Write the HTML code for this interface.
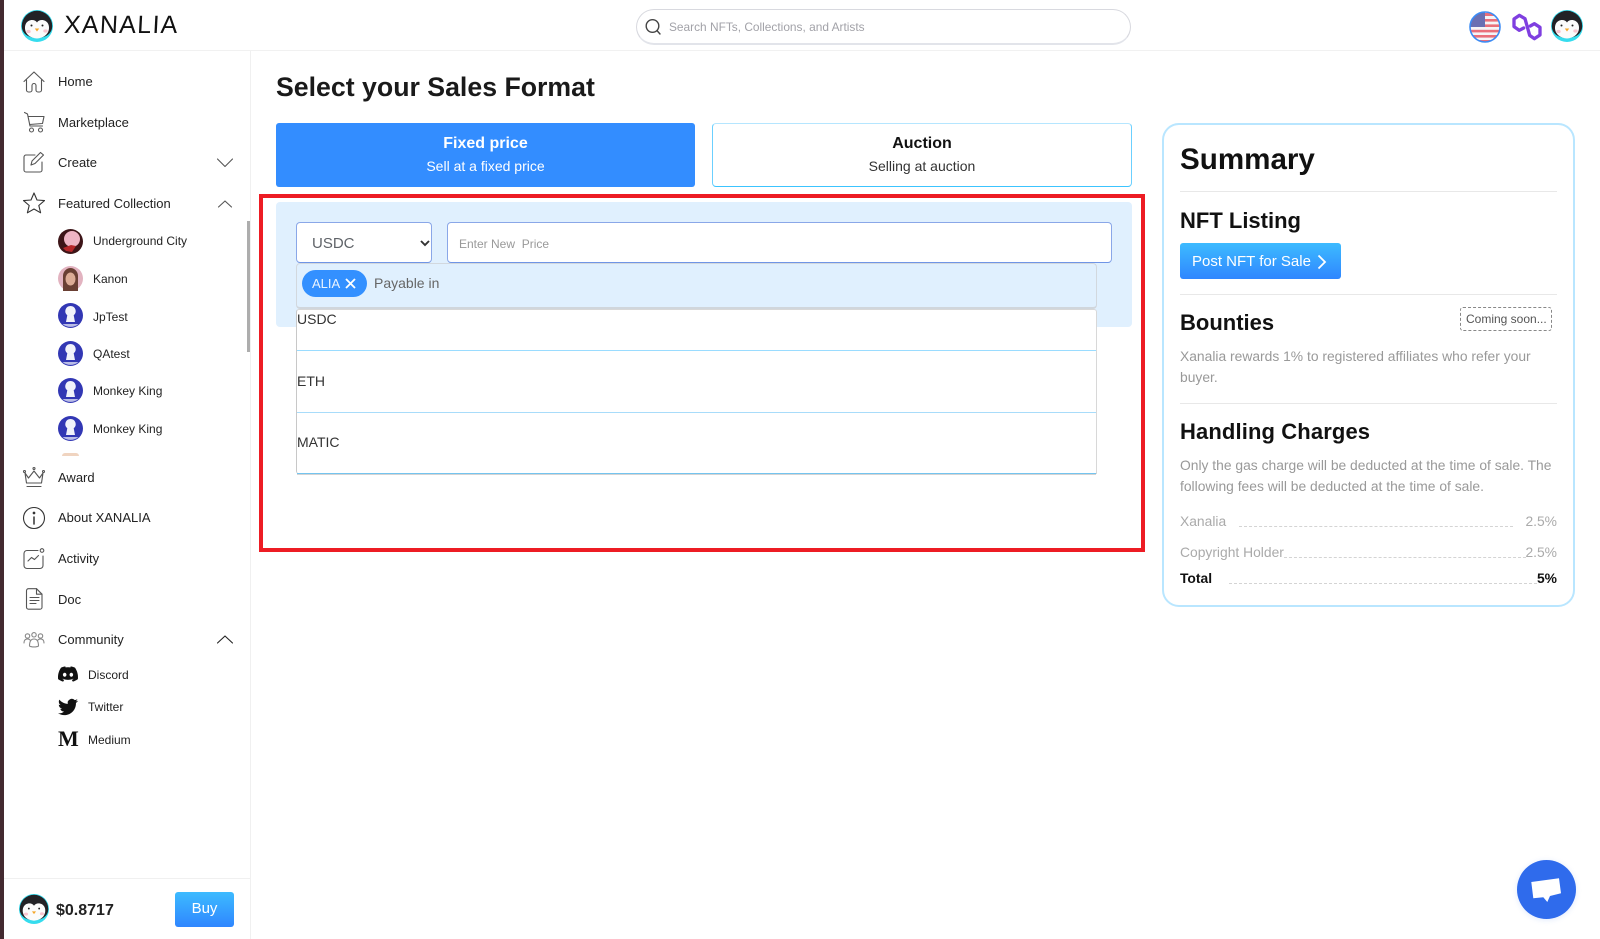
<!DOCTYPE html>
<html lang="en">
<head>
<meta charset="utf-8">
<title>Xanalia - Select your Sales Format</title>
<style>
html,body{margin:0;padding:0;width:1600px;height:939px;overflow:hidden;background:#fff;font-family:"Liberation Sans",sans-serif;color:#222}
.a{position:absolute}
.t{position:absolute;white-space:pre;line-height:20px}
.m{font-size:13px;left:58px;color:#222}
.s{font-size:12px;left:93px;color:#222}
.c{font-size:12px;left:88px;color:#222}
svg{position:absolute;overflow:visible}
.ic{fill:none;stroke:#555;stroke-width:1.1;stroke-linecap:round;stroke-linejoin:round}
.h{font-size:22px;font-weight:bold;left:1180px;color:#111;line-height:26px}
.g{font-size:13.85px;color:#999;left:1180px}
.hr{position:absolute;left:1180px;width:377px;height:1px;background:#e8e8e8}
.dot{position:absolute;height:0;border-top:1px dashed #d4d4d4}
.row{position:absolute;left:297px;font-size:14px;color:#333;line-height:20px}
</style>
</head>
<body>
<svg width="0" height="0" style="position:absolute">
<defs>
<symbol id="peng" viewBox="0 0 32 32">
<circle cx="16" cy="16" r="16" fill="#35dcee"/>
<path d="M.8 16A15.200 15.200 0 0 1 31.200 16C31.200 22 27 27.500 16 28C5 27.500 .8 22 .8 16Z" fill="#222226"/>
<path d="M16 12.500C18 9 24.500 9 27 13.500C29.500 18 28 27.500 16 28.500C4 27.500 2.500 18 5 13.500C7.500 9 14 9 16 12.500Z" fill="#fbfbfb"/>
<circle cx="10.500" cy="15.500" r="1" fill="#222"/><circle cx="21.500" cy="15.500" r="1" fill="#222"/>
<path d="M13.800 18.500H18.200L16 21.500Z" fill="#f4a72a"/>
<ellipse cx="7.500" cy="21.500" rx="2.200" ry="1.600" fill="#f9c3cf"/><ellipse cx="24.500" cy="21" rx="2.200" ry="1.600" fill="#f9c3cf"/>
</symbol>
<symbol id="blue" viewBox="0 0 25 25">
<circle cx="12.500" cy="12.500" r="12.500" fill="#3237b4"/>
<path d="M12.500 3a5.200 5.200 0 0 1 3.200 9.300L17 19H8l1.300-6.700A5.200 5.200 0 0 1 12.500 3Z" fill="#f1f2fa"/>
<path d="M4.500 21h16a12.500 12.500 0 0 1-16 0Z" fill="#b9bce6"/>
</symbol>
</defs>
</svg>

<!-- left edge strip -->
<div class="a" style="left:0;top:0;width:4px;height:939px;background:#432a30"></div>

<!-- header -->
<div class="a" style="left:4px;top:50px;width:1596px;height:1px;background:#f1f1f1"></div>
<svg style="left:21px;top:10px" width="32" height="32"><use href="#peng" width="32" height="32"/></svg>
<div class="t" style="left:64px;top:10px;font-size:25px;line-height:30px;letter-spacing:1.300px;color:#111;transform:skewX(-3deg);transform-origin:left">XANALIA</div>

<div class="a" style="left:636px;top:9px;width:493px;height:33px;border:1px solid #d8d9df;border-bottom:2px solid #e2e4ea;border-radius:18px;background:#fff"></div>
<svg style="left:645px;top:18px" width="18" height="18" class="ic"><circle cx="7.500" cy="8" r="6.300" stroke="#444" stroke-width="1.400"/><path d="M12 12.600L15 16" stroke="#444" stroke-width="1.400"/></svg>
<div class="t" style="left:669px;top:17px;font-size:11.900px;color:#a2a2a8">Search NFTs, Collections, and Artists</div>

<!-- flag -->
<svg style="left:1469px;top:11px" width="32" height="32" viewBox="0 0 32 32">
<clipPath id="fc"><circle cx="16" cy="16" r="15"/></clipPath>
<g clip-path="url(#fc)"><rect width="32" height="32" fill="#f6f4f6"/>
<g fill="#ea6f7a"><rect y="2" width="32" height="3"/><rect y="8" width="32" height="2.600"/><rect y="13.400" width="32" height="2.600"/><rect y="18.800" width="32" height="2.600"/><rect y="24" width="32" height="2.600"/><rect y="29" width="32" height="3"/></g>
<rect width="16" height="16" fill="#6a6fb2"/></g>
<circle cx="16" cy="16" r="15" fill="none" stroke="#3b8cf5" stroke-width="1.600"/>
</svg>
<!-- polygon icon -->
<svg style="left:1505px;top:8px" width="45" height="36" viewBox="0 0 135 108" fill="none" stroke="#7f3fe0" stroke-width="10" stroke-linejoin="round" stroke-linecap="round">
<path d="M56 60L43 67 27 56V33L43 22 60 32 74 82 88 92 105 81V58L88 47 76 54"/>
</svg>
<svg style="left:1551px;top:10px" width="32" height="32"><use href="#peng" width="32" height="32"/></svg>

<!-- sidebar -->
<div class="a" style="left:250px;top:51px;width:1px;height:888px;background:#f0f0f0"></div>
<div class="a" style="left:247px;top:221px;width:3px;height:131px;background:#adadad"></div>

<!-- home -->
<svg style="left:23px;top:71px" width="22" height="22" viewBox="0 0 22 22" class="ic"><path d="M1 10.500L11 1l10 9.500M3.500 9v10a2 2 0 0 0 2 2h1.500a2 2 0 0 0 2-2v-4.500a2 2 0 0 1 4 0V19a2 2 0 0 0 2 2h1.500a2 2 0 0 0 2-2V9"/></svg>
<div class="t m" style="top:72px">Home</div>
<!-- cart -->
<svg style="left:24px;top:112px" width="21" height="21" viewBox="0 0 21 21" class="ic"><path d="M0.500 0.500L3.500 2l2.500 12h12.500M4.200 4.500H20l-1.500 7-13 1"/><circle cx="7.500" cy="18" r="2"/><circle cx="16.500" cy="18" r="2"/></svg>
<div class="t m" style="top:113px">Marketplace</div>
<!-- create -->
<svg style="left:23px;top:151px" width="22" height="22" viewBox="0 0 22 22" class="ic"><path d="M12 4H3a2 2 0 0 0-2 2v13a2 2 0 0 0 2 2h14a2 2 0 0 0 2-2v-8"/><path d="M8 14l1-4L17.500 1.500l3 2.500-8.500 8.500Z"/></svg>
<div class="t m" style="top:153px">Create</div>
<svg style="left:217px;top:158px" width="16" height="10" viewBox="0 0 16 10" class="ic"><path d="M0.500 1L8 8.500 15.500 1"/></svg>
<!-- star -->
<svg style="left:23px;top:192px" width="22" height="22" viewBox="0 0 22 22" class="ic"><path d="M11 1l3 7 7.500.6-5.700 4.900 1.800 7.300L11 17l-6.600 3.800 1.800-7.300L.5 8.600 8 8Z" stroke="#333"/></svg>
<div class="t m" style="top:194px">Featured Collection</div>
<svg style="left:218px;top:200px" width="14" height="8" viewBox="0 0 14 8" class="ic"><path d="M0.500 7L7 1l6.500 6"/></svg>

<svg style="left:58px;top:229px" width="25" height="25" viewBox="0 0 25 25"><circle cx="12.500" cy="12.500" r="12.500" fill="#3d1518"/><circle cx="14" cy="10" r="8" fill="#eeb4c4"/><path d="M5 19l8-3 5 1-4 6-6-1Z" fill="#b5272a"/></svg>
<div class="t s" style="top:231px">Underground City</div>
<svg style="left:58px;top:266px" width="25" height="25" viewBox="0 0 25 25"><circle cx="12.500" cy="12.500" r="12.500" fill="#e2b3c0"/><path d="M5 25V10a7.500 8 0 0 1 15 0v15Z" fill="#6a3f33"/><ellipse cx="12.500" cy="13" rx="5" ry="6.500" fill="#dcab95"/></svg>
<div class="t s" style="top:269px">Kanon</div>
<svg style="left:58px;top:303px" width="25" height="25"><use href="#blue" width="25" height="25"/></svg>
<div class="t s" style="top:307px">JpTest</div>
<svg style="left:58px;top:341px" width="25" height="25"><use href="#blue" width="25" height="25"/></svg>
<div class="t s" style="top:344px">QAtest</div>
<svg style="left:58px;top:378px" width="25" height="25"><use href="#blue" width="25" height="25"/></svg>
<div class="t s" style="top:381px">Monkey King</div>
<svg style="left:58px;top:416px" width="25" height="25"><use href="#blue" width="25" height="25"/></svg>
<div class="t s" style="top:419px">Monkey King</div>
<div class="a" style="left:62px;top:453px;width:17px;height:3px;background:#f0d4c0;border-radius:9px 9px 0 0"></div>

<!-- award -->
<svg style="left:23px;top:467px" width="22" height="21" viewBox="0 0 22 21" class="ic"><path d="M2 6l3.500 5L11 4l5.500 7L20 6l-1.500 10h-15Z"/><path d="M4 19.500h14"/><circle cx="1.500" cy="4.500" r="1"/><circle cx="11" cy="1.500" r="1"/><circle cx="20.500" cy="4.500" r="1"/></svg>
<div class="t m" style="top:468px">Award</div>
<!-- about -->
<svg style="left:22px;top:506px" width="24" height="24" viewBox="0 0 24 24" class="ic"><circle cx="12" cy="12" r="10.500" stroke="#333"/><path d="M12 11v7" stroke="#333" stroke-width="1.500"/><circle cx="12" cy="7" r=".8" fill="#333" stroke="#333"/></svg>
<div class="t m" style="top:508px">About XANALIA</div>
<!-- activity -->
<svg style="left:23px;top:548px" width="22" height="22" viewBox="0 0 22 22" class="ic"><path d="M15 2.500H4a3 3 0 0 0-3 3v12a3 3 0 0 0 3 3h13a3 3 0 0 0 3-3V8"/><circle cx="19" cy="2.500" r="1.800"/><path d="M5 13l3.500-3.500 3 2 4-4"/></svg>
<div class="t m" style="top:549px">Activity</div>
<!-- doc -->
<svg style="left:26px;top:588px" width="17" height="22" viewBox="0 0 17 22" class="ic"><path d="M2.500 .7h8l5.500 5.500v13a2 2 0 0 1-2 2H2.500a2 2 0 0 1-2-2V2.700a2 2 0 0 1 2-2Z"/><path d="M10.500 .7v5.500H16M4 9.500h9M4 12.500h9M4 15.500h6"/></svg>
<div class="t m" style="top:590px">Doc</div>
<!-- community -->
<svg style="left:23px;top:632px" width="22" height="16" viewBox="0 0 22 16" class="ic"><g stroke="#888"><circle cx="4.500" cy="4" r="2.200"/><circle cx="11" cy="2.800" r="2.200"/><circle cx="17.500" cy="4" r="2.200"/><path d="M1 11c0-3 1.500-4 3.500-4 1 0 2 .4 2.500 1M21 11c0-3-1.500-4-3.500-4-1 0-2 .4-2.500 1M6.500 14c0-5 2-7 4.500-7s4.500 2 4.500 7c-2 1.300-7 1.300-9 0Z"/></g></svg>
<div class="t m" style="top:630px">Community</div>
<svg style="left:217px;top:635px" width="16" height="9" viewBox="0 0 16 9" class="ic"><path d="M0.500 8L8 1l7.500 7" stroke="#222"/></svg>

<svg style="left:58px;top:664px" width="20" height="20" viewBox="0 0 24 24"><path fill="#111" d="M20.317 4.3698a19.7913 19.7913 0 00-4.8851-1.5152.0741.0741 0 00-.0785.0371c-.211.3753-.4447.8648-.6083 1.2495-1.8447-.2762-3.68-.2762-5.4868 0-.1636-.3933-.4058-.8742-.6177-1.2495a.077.077 0 00-.0785-.037 19.7363 19.7363 0 00-4.8852 1.515.0699.0699 0 00-.0321.0277C.5334 9.0458-.319 13.5799.0992 18.0578a.0824.0824 0 00.0312.0561c2.0528 1.5076 4.0413 2.4228 5.9929 3.0294a.0777.0777 0 00.0842-.0276c.4616-.6304.8731-1.2952 1.226-1.9942a.076.076 0 00-.0416-.1057c-.6528-.2476-1.2743-.5495-1.8722-.8923a.077.077 0 01-.0076-.1277c.1258-.0943.2517-.1923.3718-.2914a.0743.0743 0 01.0776-.0105c3.9278 1.7933 8.18 1.7933 12.0614 0a.0739.0739 0 01.0785.0095c.1202.099.246.1981.3728.2924a.077.077 0 01-.0066.1276 12.2986 12.2986 0 01-1.873.8914.0766.0766 0 00-.0407.1067c.3604.698.7719 1.3628 1.225 1.9932a.076.076 0 00.0842.0286c1.961-.6067 3.9495-1.5219 6.0023-3.0294a.077.077 0 00.0313-.0552c.5004-5.177-.8382-9.6739-3.5485-13.6604a.061.061 0 00-.0312-.0286zM8.02 15.3312c-1.1825 0-2.1569-1.0857-2.1569-2.419 0-1.3332.9555-2.4189 2.157-2.4189 1.2108 0 2.1757 1.0952 2.1568 2.419 0 1.3332-.9555 2.4189-2.1569 2.4189zm7.9748 0c-1.1825 0-2.1569-1.0857-2.1569-2.419 0-1.3332.9554-2.4189 2.1569-2.4189 1.2108 0 2.1757 1.0952 2.1568 2.419 0 1.3332-.946 2.4189-2.1568 2.4189Z"/></svg>
<div class="t c" style="top:665px">Discord</div>
<svg style="left:58px;top:697px" width="20" height="20" viewBox="0 0 24 24"><path fill="#111" d="M23.953 4.57a10 10 0 01-2.825.775 4.958 4.958 0 002.163-2.723c-.951.555-2.005.959-3.127 1.184a4.92 4.92 0 00-8.384 4.482C7.69 8.095 4.067 6.13 1.64 3.162a4.822 4.822 0 00-.666 2.475c0 1.71.87 3.213 2.188 4.096a4.904 4.904 0 01-2.228-.616v.06a4.923 4.923 0 003.946 4.827 4.996 4.996 0 01-2.212.085 4.936 4.936 0 004.604 3.417 9.867 9.867 0 01-6.102 2.105c-.39 0-.779-.023-1.17-.067a13.995 13.995 0 007.557 2.209c9.053 0 13.998-7.496 13.998-13.985 0-.21 0-.42-.015-.63A9.935 9.935 0 0024 4.59z"/></svg>
<div class="t c" style="top:697px">Twitter</div>
<div class="t" style="left:58px;top:727px;font-family:'Liberation Serif',serif;font-weight:bold;font-size:22px;line-height:24px;color:#111">M</div>
<div class="t c" style="top:730px">Medium</div>

<!-- sidebar footer -->
<div class="a" style="left:4px;top:878px;width:246px;height:1px;background:#f0f0f0"></div>
<svg style="left:19px;top:894px" width="30" height="30"><use href="#peng" width="30" height="30"/></svg>
<div class="t" style="left:56px;top:900.500px;font-size:16px;font-weight:bold;color:#222">$0.8717</div>
<div class="a" style="left:175px;top:892px;width:59px;height:35px;border-radius:3px;background:linear-gradient(#3dbbff,#2f86ff);color:#fff;font-size:15px;line-height:33px;text-align:center">Buy</div>

<!-- main -->
<div class="t" style="left:276px;top:70px;font-size:26.700px;font-weight:bold;line-height:34px;color:#1a1a1a">Select your Sales Format</div>

<div class="a" style="left:276px;top:123px;width:419px;height:64px;background:#338dff;border-radius:3px"></div>
<div class="t" style="left:276px;width:419px;top:133.500px;text-align:center;font-size:16px;font-weight:bold;color:#fff">Fixed price</div>
<div class="t" style="left:276px;width:419px;top:156px;text-align:center;font-size:14px;color:#fff">Sell at a fixed price</div>

<div class="a" style="left:712px;top:123px;width:418px;height:62px;border:1px solid #6bd0ff;border-top-color:#b5e6ff;border-bottom-color:#3cc4ff;border-radius:4px;background:#fff"></div>
<div class="t" style="left:712px;width:420px;top:133.500px;text-align:center;font-size:16px;font-weight:bold;color:#111">Auction</div>
<div class="t" style="left:712px;width:420px;top:156px;text-align:center;font-size:14px;color:#333">Selling at auction</div>

<!-- blue panel -->
<div class="a" style="left:276px;top:202px;width:856px;height:125px;background:#e0f0fe;border-radius:4px"></div>

<!-- select -->
<div class="a" style="left:296px;top:222px;width:134px;height:39px;border:1px solid #8aa7e8;border-bottom-color:#6f95e6;border-radius:4px;background:#fff"></div>
<div class="t" style="left:312px;top:234px;font-size:15px;color:#5f6368">USDC</div>
<svg style="left:419px;top:239px" width="12" height="8" viewBox="0 0 12 8"><path d="M2 2l4 4 4-4" fill="none" stroke="#333" stroke-width="1.900"/></svg>
<!-- input -->
<div class="a" style="left:447px;top:222px;width:663px;height:39px;border:1px solid #8aa7e8;border-bottom-color:#6f95e6;border-radius:4px;background:#fff"></div>
<div class="t" style="left:459px;top:234px;font-size:12px;color:#999">Enter New  Price</div>

<!-- payable -->
<div class="a" style="left:296px;top:263px;width:799px;height:43px;border:1px solid #d2d8de;border-bottom:2px solid #d0d6dc;border-radius:4px;background:#e0f0fe"></div>
<div class="a" style="left:302px;top:270px;width:65px;height:27px;border-radius:14px;background:#3390ff"></div>
<div class="t" style="left:312px;top:274px;font-size:13px;color:#eaf4ff">ALIA</div>
<svg style="left:345px;top:278px" width="11" height="11" viewBox="0 0 11 11"><path d="M1 1l9 9M10 1l-9 9" stroke="#fff" stroke-width="1.800" fill="none"/></svg>
<div class="t" style="left:374px;top:273px;font-size:14px;color:#666">Payable in</div>

<!-- list -->
<div class="a" style="left:296px;top:309px;width:799px;height:164px;border:1px solid #d8d8d8;border-bottom:none;border-left-color:#c8c8c8;border-radius:3px 3px 0 3px;background:#fff"></div>
<div class="a" style="left:297px;top:350px;width:799px;height:1px;background:#9adcff"></div>
<div class="a" style="left:297px;top:412px;width:799px;height:1px;background:#a8dcfa"></div>
<div class="a" style="left:297px;top:473px;width:799px;height:1px;background:#74c4ef"></div>
<div class="a" style="left:297px;top:474px;width:799px;height:1px;background:#d4d4d4"></div>
<div class="row" style="top:309px">USDC</div>
<div class="row" style="top:371px">ETH</div>
<div class="row" style="top:432px">MATIC</div>

<!-- red annotation -->
<div class="a" style="left:259px;top:194px;width:878px;height:350px;border:4px solid #ed1c24"></div>

<!-- summary card -->
<div class="a" style="left:1162px;top:123px;width:409px;height:480px;border:2px solid #b9e6ff;border-radius:17px;background:#fff"></div>
<div class="t h" style="top:142px;font-size:29.600px;line-height:36px">Summary</div>
<div class="hr" style="top:191px"></div>
<div class="t h" style="top:207.500px">NFT Listing</div>
<div class="a" style="left:1180px;top:243px;width:161px;height:36px;border-radius:3px;background:linear-gradient(#3dbbff,#2f86ff)"></div>
<div class="t" style="left:1192px;top:251.500px;font-size:15px;color:#fff">Post NFT for Sale</div>
<svg style="left:1317px;top:254px" width="10" height="16" viewBox="0 0 10 16"><path d="M1.500 1.500L8 8l-6.500 6.500" fill="none" stroke="#fff" stroke-width="1.800"/></svg>
<div class="hr" style="top:294px"></div>
<div class="t h" style="top:310px">Bounties</div>
<div class="a" style="left:1460px;top:307px;width:90px;height:22px;border:1px dashed #888;border-radius:3px"></div>
<div class="t" style="left:1466px;top:309px;font-size:12px;color:#555">Coming soon...</div>
<div class="t g" style="top:346px">Xanalia rewards 1% to registered affiliates who refer your</div>
<div class="t g" style="top:366.500px">buyer.</div>
<div class="hr" style="top:403px"></div>
<div class="t h" style="top:419px;letter-spacing:.12px">Handling Charges</div>
<div class="t g" style="top:455px">Only the gas charge will be deducted at the time of sale. The</div>
<div class="t g" style="top:476px">following fees will be deducted at the time of sale.</div>

<div class="t g" style="top:511px;color:#aaa">Xanalia</div>
<div class="dot" style="left:1239px;top:526px;width:274px"></div>
<div class="t g" style="top:511px;left:auto;right:43px;color:#aaa">2.5%</div>
<div class="t g" style="top:542px;color:#aaa">Copyright Holder</div>
<div class="dot" style="left:1284px;top:557px;width:242px"></div>
<div class="t g" style="top:542px;left:auto;right:43px;color:#aaa">2.5%</div>
<div class="t g" style="top:568px;font-weight:bold;color:#111">Total</div>
<div class="dot" style="left:1229px;top:583px;width:308px"></div>
<div class="t g" style="top:568px;left:auto;right:43px;font-weight:bold;color:#111">5%</div>

<!-- chat button -->
<div class="a" style="left:1517px;top:860px;width:59px;height:59px;border-radius:50%;background:#2f6bec;box-shadow:0 1px 6px rgba(47,107,236,.15)"></div>
<svg style="left:1530px;top:877px" width="34" height="28" viewBox="0 0 34 28"><path d="M1.300 5L29 1.300 31 16.300 20 19 17.300 25 13.300 20.300 3.300 21.300Z" fill="#fff"/></svg>
</body>
</html>
